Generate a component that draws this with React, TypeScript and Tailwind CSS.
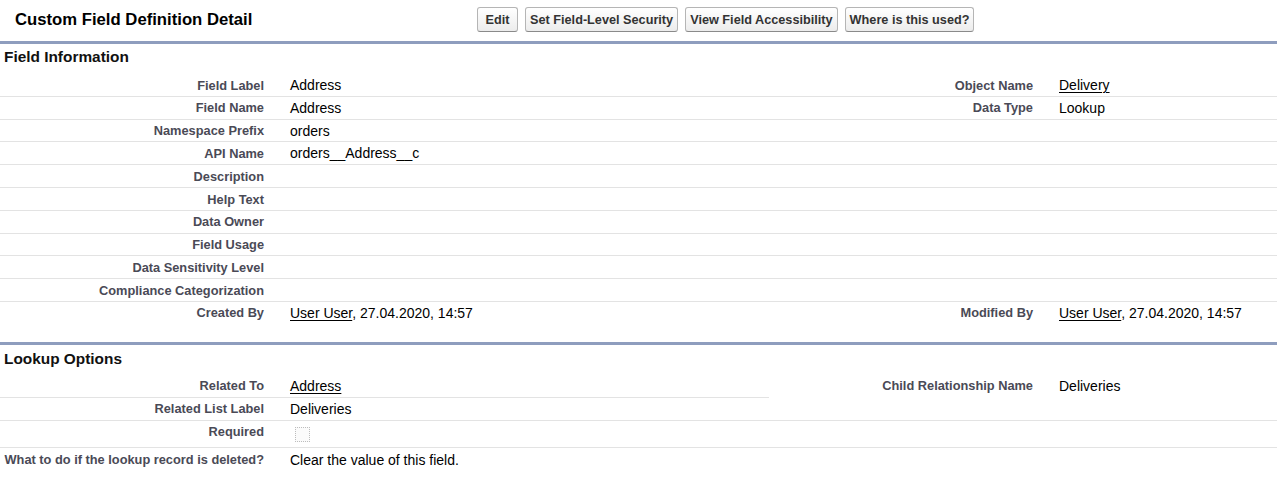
import type { ReactNode } from "react";

type Cell = { label?: string; value?: ReactNode };

const labelCls =
  "w-[274px] shrink-0 pr-[10px] text-right text-[12.8px] font-bold leading-[15px] text-[#4a4a56]";
const valueCls = "min-w-0 flex-1 pl-[16px] pt-[0.5px] text-[14px] leading-[15px] text-black";

function Half({
  cell,
  bordered,
  wide,
  pt,
}: {
  cell?: Cell;
  bordered: boolean;
  wide?: boolean;
  pt: string;
}) {
  return (
    <div
      className={`flex ${pt} ${wide ? "w-[769px] shrink-0" : "flex-1"} ${
        bordered ? "border-b border-[#e3e3e3]" : ""
      }`}
    >
      <div className={labelCls}>{cell?.label}</div>
      <div className={valueCls}>{cell?.value}</div>
    </div>
  );
}

function Row({
  left,
  right,
  border = "full",
  height = "h-[22.78px]",
  pt = "pt-[3.5px]",
}: {
  left: Cell;
  right?: Cell;
  border?: "full" | "left" | "none";
  height?: string;
  pt?: string;
}) {
  return (
    <div className={`flex ${height}`}>
      <Half cell={left} bordered={border !== "none"} wide pt={pt} />
      <Half cell={right} bordered={border === "full"} pt={pt} />
    </div>
  );
}

function Link({ children }: { children: ReactNode }) {
  return <span className="underline decoration-1 underline-offset-[2px]">{children}</span>;
}

function SectionHeader({ title, pt = "pt-[3.5px]" }: { title: string; pt?: string }) {
  return (
    <div
      className={`h-[30.2px] pl-[4px] ${pt} text-[15.4px] font-bold leading-[18px] text-[#111]`}
    >
      {title}
    </div>
  );
}

function Btn({ children }: { children: string }) {
  return (
    <button
      type="button"
      className="whitespace-pre rounded-[3px] border border-[#b5b5b5] border-b-[#8a8a8a] bg-linear-to-b from-white to-[#ececec] px-[4px] pt-[4.5px] pb-[3.5px] text-[12.7px] font-bold leading-[15px] text-[#333]"
    >
      {children}
    </button>
  );
}

const modified = (
  <>
    <Link>User User</Link>, 27.04.2020, 14:57
  </>
);

export default function App() {
  return (
    <div className="min-h-[483px] bg-white font-['Liberation_Sans',Arial,sans-serif]">
      <div className="flex h-[41px] items-start pt-[7px]">
        <h2 className="w-[477px] shrink-0 pl-[15px] pt-[2.5px] text-[16.7px] font-bold leading-[20px] text-black">
          Custom Field Definition Detail
        </h2>
        <div className="flex gap-[7px]">
          <Btn>{" Edit "}</Btn>
          <Btn>Set Field-Level Security</Btn>
          <Btn>View Field Accessibility</Btn>
          <Btn>Where is this used?</Btn>
        </div>
      </div>

      <div className="border-t-[3px] border-[#8e9dbe] pb-[17.2px]">
        <SectionHeader title="Field Information" />
        <Row
          left={{ label: "Field Label", value: "Address" }}
          right={{ label: "Object Name", value: <Link>Delivery</Link> }}
        />
        <Row
          left={{ label: "Field Name", value: "Address" }}
          right={{ label: "Data Type", value: "Lookup" }}
        />
        <Row left={{ label: "Namespace Prefix", value: "orders" }} />
        <Row left={{ label: "API Name", value: "orders__Address__c" }} />
        <Row left={{ label: "Description" }} />
        <Row left={{ label: "Help Text" }} />
        <Row left={{ label: "Data Owner" }} />
        <Row left={{ label: "Field Usage" }} />
        <Row left={{ label: "Data Sensitivity Level" }} />
        <Row left={{ label: "Compliance Categorization" }} />
        <Row
          border="none"
          left={{ label: "Created By", value: modified }}
          right={{ label: "Modified By", value: modified }}
        />
      </div>

      <div className="border-t-[3px] border-[#8e9dbe]">
        <SectionHeader title="Lookup Options" pt="pt-[5px]" />
        <Row
          border="left"
          left={{ label: "Related To", value: <Link>Address</Link> }}
          right={{ label: "Child Relationship Name", value: "Deliveries" }}
        />
        <Row left={{ label: "Related List Label", value: "Deliveries" }} />
        <div className="flex h-[27px] border-b border-[#e3e3e3]">
          <div className={`${labelCls} pt-[3.5px]`}>Required</div>
          <div className="pl-[21px] pt-[6px]">
            <div className="h-[15px] w-[15px] border border-dotted border-[#bdbdbd] bg-[#fbfbfb]" />
          </div>
        </div>
        <Row
          border="none"
          height="h-[24px]"
          pt="pt-[4.5px]"
          left={{
            label: "What to do if the lookup record is deleted?",
            value: "Clear the value of this field.",
          }}
        />
      </div>
    </div>
  );
}
